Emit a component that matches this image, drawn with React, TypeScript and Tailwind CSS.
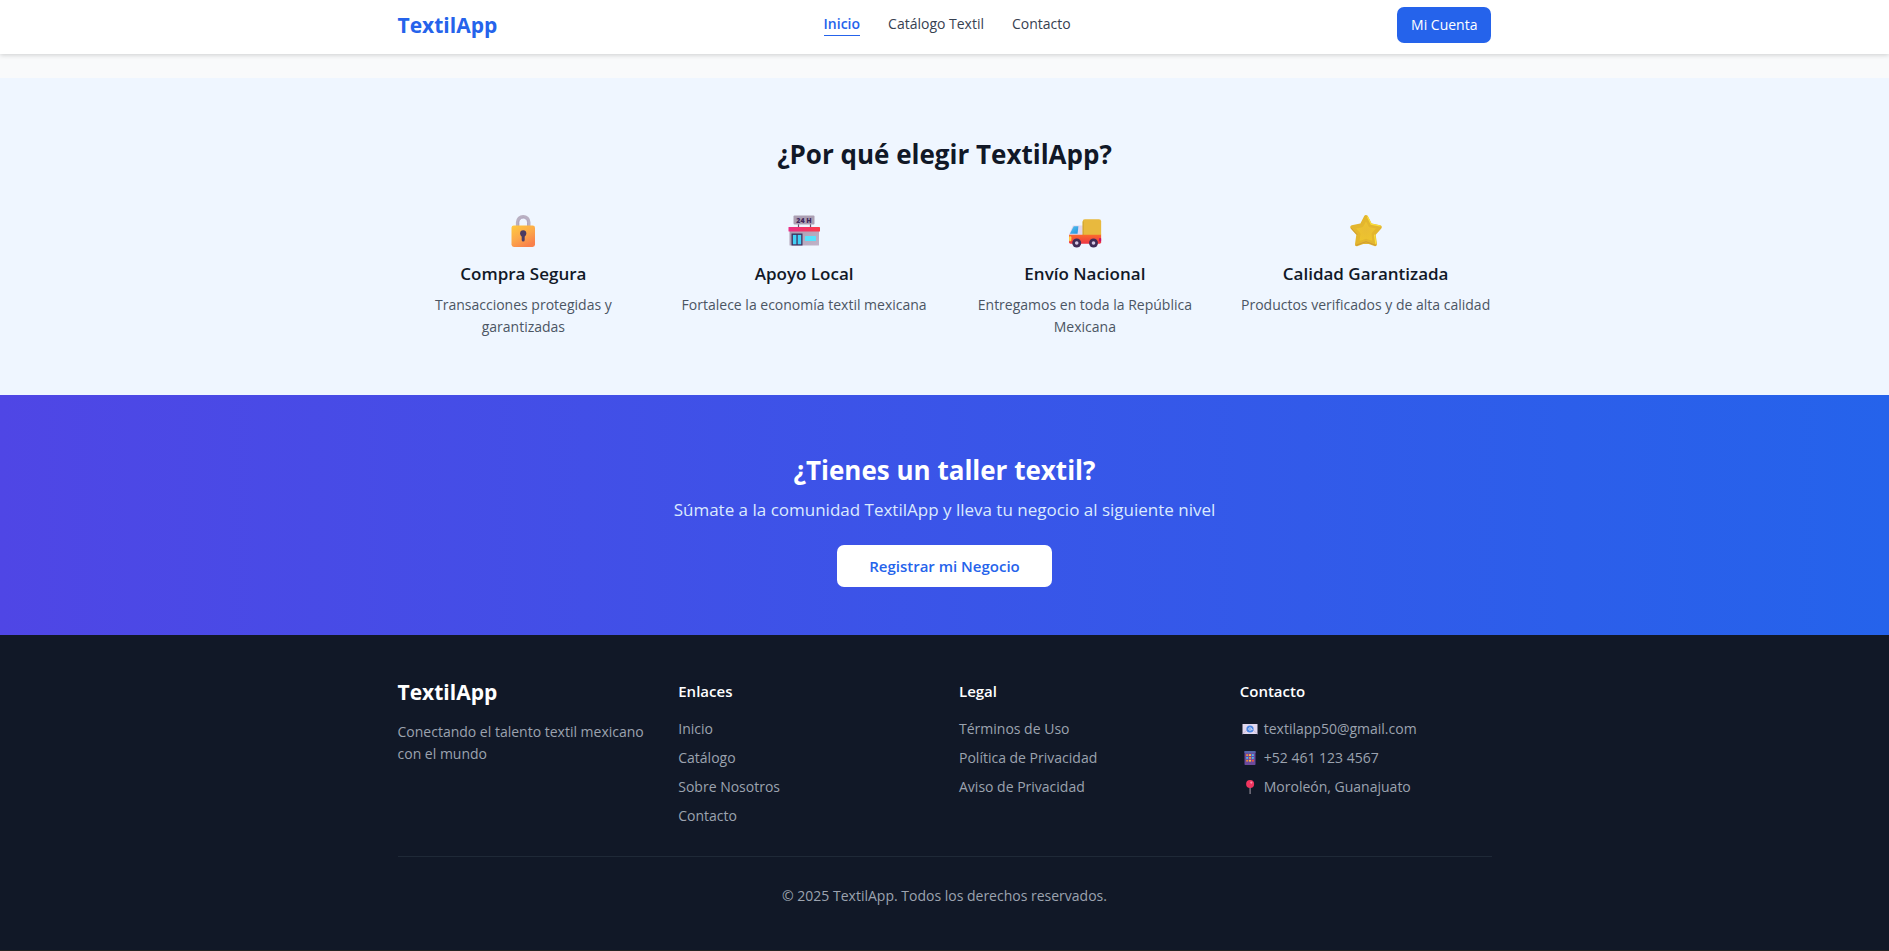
import type { ReactNode } from 'react';

function LockIcon() {
  return (
    <svg viewBox="0 0 34 34" className="size-[34px]" aria-hidden="true">
      <defs>
        <linearGradient id="lockBody" x1="0" y1="0" x2="0.6" y2="1">
          <stop offset="0" stopColor="#ffca3e" />
          <stop offset="0.55" stopColor="#fca94a" />
          <stop offset="1" stopColor="#f9814b" />
        </linearGradient>
      </defs>
      <path d="M11.4 13V8.2a5.8 5.8 0 0 1 11.600 0V13" fill="none" stroke="#b9b0c2" strokeWidth="3" />
      <path d="M12.900 13V8.400a4.300 4.300 0 0 1 8.600 0V13" fill="none" stroke="#a08fb0" strokeWidth="0.7" />
      <rect x="5.500" y="11.400" width="23.500" height="21.600" rx="2.400" fill="url(#lockBody)" />
      <circle cx="17.200" cy="19.400" r="3.100" fill="#4b3b62" />
      <rect x="15.700" y="19.500" width="3" height="8" rx="1.500" fill="#4b3b62" />
    </svg>
  );
}

function StoreIcon() {
  return (
    <svg viewBox="0 0 34 34" className="size-[34px]" aria-hidden="true">
      <defs>
        <linearGradient id="storeRoof">
          <stop offset="0" stopColor="#ea2f87" />
          <stop offset="1" stopColor="#fc3c48" />
        </linearGradient>
        <linearGradient id="storeWall" x1="0" y1="0" x2="1" y2="1">
          <stop offset="0" stopColor="#a79bad" />
          <stop offset="1" stopColor="#c1b3c9" />
        </linearGradient>
      </defs>
      <path d="M11.500 9v5M23.500 9v5" stroke="#635170" strokeWidth="1.200" />
      <rect x="6.500" y="1.500" width="21" height="9" rx="1" fill="#ab9fb3" />
      <text x="17" y="8.600" textAnchor="middle" fontSize="7" fontWeight="800" fill="#42285c" fontFamily="Open Sans, sans-serif">24 H</text>
      <rect x="2.500" y="14" width="29.500" height="17.500" rx="0.600" fill="url(#storeWall)" />
      <rect x="1.500" y="13" width="31.500" height="4.500" rx="0.600" fill="url(#storeRoof)" />
      <rect x="4.500" y="19.500" width="11" height="12" fill="#41305f" />
      <rect x="5.900" y="20.900" width="3.500" height="9.400" fill="#43d1f6" />
      <rect x="10.700" y="20.900" width="3.500" height="9.400" fill="#43d1f6" />
      <rect x="18" y="22" width="11" height="5" rx="0.500" fill="#56e2fc" />
    </svg>
  );
}

function TruckIcon() {
  return (
    <svg viewBox="0 0 32 32" className="size-[34px]" aria-hidden="true">
      <defs>
        <linearGradient id="truckBase" x1="0" y1="0" x2="0" y2="1">
          <stop offset="0" stopColor="#fb6a2c" />
          <stop offset="1" stopColor="#ee3745" />
        </linearGradient>
        <linearGradient id="truckGlass" x1="0" y1="0" x2="1" y2="1">
          <stop offset="0" stopColor="#58c3ef" />
          <stop offset="1" stopColor="#2293dd" />
        </linearGradient>
      </defs>
      <path d="M4.600 10.800H15v11H1v-2.400z" fill="#e2d6ec" />
      <path d="M5.400 11.600h4.400l-.8 7H1.800z" fill="url(#truckGlass)" />
      <rect x="13.800" y="5" width="17.400" height="16" rx="2" fill="#e8b93e" />
      <path d="M14.300 7v13" stroke="#cda431" strokeWidth="1" />
      <path d="M1 19.600h30.200v6.900a1.400 1.400 0 0 1-1.400 1.400H2.400A1.400 1.400 0 0 1 1 26.500z" fill="url(#truckBase)" />
      <rect x="1" y="21" width="2.200" height="4.600" rx="1" fill="#ffd545" />
      <rect x="29.200" y="22.500" width="2" height="3.500" rx="0.800" fill="#c90f65" />
      <circle cx="8.200" cy="27.300" r="4.200" fill="#402c56" />
      <circle cx="8.200" cy="27.300" r="1.700" fill="#d5c8e3" />
      <circle cx="24" cy="27.300" r="4.200" fill="#402c56" />
      <circle cx="24" cy="27.300" r="1.700" fill="#d5c8e3" />
    </svg>
  );
}

function StarIcon() {
  return (
    <svg viewBox="0 0 34 34" className="size-[34px]" aria-hidden="true">
      <defs>
        <radialGradient id="starFill" cx="0.5" cy="0.5" r="0.55">
          <stop offset="0" stopColor="#e9bd34" />
          <stop offset="0.7" stopColor="#edc42e" />
          <stop offset="1" stopColor="#dfb02f" />
        </radialGradient>
      </defs>
      <path
        d="M17 3L21.200 11.200L30.800 13.200L24.600 20.200L26 30.200L17 26.800L8 30.200L9.400 20.200L3.200 13.200L12.800 11.200Z"
        fill="url(#starFill)"
        stroke="#e3b62e"
        strokeWidth="4"
        strokeLinejoin="round"
      />
      <path d="M18.600 3l3.600 7.200 9 1.800M26.800 29.500L25.600 21" fill="none" stroke="#fbe03a" strokeWidth="1.200" strokeLinecap="round" />
      <path d="M2.400 14.500l5.600 6M7 31.300l10-3.600 9.500 3.600" fill="none" stroke="#cf9a35" strokeWidth="1" strokeLinecap="round" />
    </svg>
  );
}

function MailIcon() {
  return (
    <svg viewBox="0 0 16 16" className="size-4 shrink-0" aria-hidden="true">
      <rect x="0.500" y="3" width="15" height="10" fill="#e2d8ee" />
      <path d="M.5 13l5-4.500M15.500 13l-5-4.500" stroke="#c5b3d8" strokeWidth="0.800" />
      <circle cx="8" cy="8" r="3.600" fill="#4a84e0" />
      <circle cx="8" cy="8" r="1.300" fill="none" stroke="#dce7fb" strokeWidth="0.800" />
      <path d="M9.300 6.800v1.600c0 1 1.300.8 1.300-.4" fill="none" stroke="#dce7fb" strokeWidth="0.600" />
    </svg>
  );
}

function PhoneIcon() {
  const keys = [4.2, 7, 9.8];
  return (
    <svg viewBox="0 0 16 16" className="size-4 shrink-0" aria-hidden="true">
      <rect x="2.500" y="1" width="11" height="14" rx="0.800" fill="#6b4a9c" />
      <rect x="2.500" y="1" width="11" height="2" rx="0.600" fill="#5565a8" />
      {keys.map((y, row) => (
        <g key={y}>
          <rect x="4.200" y={y} width="2" height="1.800" fill={row === 1 ? '#4fb8f0' : '#f58a3c'} />
          <rect x="7" y={y} width="2" height="1.800" fill={row === 1 ? '#f58a3c' : '#f7c04a'} />
          <rect x="9.800" y={y} width="2" height="1.800" fill={row === 2 ? '#f5573c' : '#4fb8f0'} />
        </g>
      ))}
    </svg>
  );
}

function PinIcon() {
  return (
    <svg viewBox="0 0 16 16" className="size-4 shrink-0" aria-hidden="true">
      <rect x="7.500" y="7" width="1.200" height="8" fill="#8c8794" />
      <circle cx="8.100" cy="5" r="4" fill="#f0355f" />
      <circle cx="9.300" cy="3.600" r="1.100" fill="#ff8fa8" />
    </svg>
  );
}

const features: { icon: ReactNode; title: string; text: string }[] = [
  { icon: <LockIcon />, title: 'Compra Segura', text: 'Transacciones protegidas y garantizadas' },
  { icon: <StoreIcon />, title: 'Apoyo Local', text: 'Fortalece la economía textil mexicana' },
  { icon: <TruckIcon />, title: 'Envío Nacional', text: 'Entregamos en toda la República Mexicana' },
  { icon: <StarIcon />, title: 'Calidad Garantizada', text: 'Productos verificados y de alta calidad' },
];

const linkGroups = [
  { title: 'Enlaces', links: ['Inicio', 'Catálogo', 'Sobre Nosotros', 'Contacto'] },
  { title: 'Legal', links: ['Términos de Uso', 'Política de Privacidad', 'Aviso de Privacidad'] },
];

const contacts: { icon: ReactNode; text: string }[] = [
  { icon: <MailIcon />, text: 'textilapp50@gmail.com' },
  { icon: <PhoneIcon />, text: '+52 461 123 4567' },
  { icon: <PinIcon />, text: 'Moroleón, Guanajuato' },
];

export default function App() {
  return (
    <div className="flex min-h-screen flex-col bg-[#222222] font-['Segoe_UI','Open_Sans','Noto_Sans',sans-serif] text-[14px] leading-[22px]">
      <header className="relative z-10 bg-white shadow-[0_1px_5px_rgba(0,0,0,0.18)]">
        <div className="mx-auto flex h-[54px] max-w-[1152px] items-start justify-between px-[29px] pt-[7px]">
          <a href="#inicio" className="text-[21px] leading-9 font-bold text-[#2563eb]">TextilApp</a>
          <nav className="flex gap-7 pt-[6px] text-[#374151]">
            <a href="#inicio" className="border-b border-[#2563eb] font-semibold text-[#2563eb]">Inicio</a>
            <a href="#catalogo">Catálogo Textil</a>
            <a href="#contacto">Contacto</a>
          </nav>
          <button type="button" className="h-9 rounded-[7px] bg-[#2563eb] px-[14px] font-medium text-white">Mi Cuenta</button>
        </div>
      </header>

      <main>
        <section className="border-t-[24px] border-[#f9fafb] bg-[#eff6ff] pt-[58px] pb-[57px]">
          <div className="mx-auto max-w-[1152px] px-[29px]">
            <h2 className="text-center text-[26px] leading-9 font-bold text-[#111827]">¿Por qué elegir TextilApp?</h2>
            <div className="mt-[42px] grid grid-cols-4 gap-[29px]">
              {features.map((f) => (
                <div key={f.title} className="flex flex-col items-center text-center">
                  {f.icon}
                  <h3 className="mt-[14px] text-[17px] leading-6 font-semibold text-[#111827]">{f.title}</h3>
                  <p className="mt-2 text-[#4b5563]">{f.text}</p>
                </div>
              ))}
            </div>
          </div>
        </section>

        <section className="flex flex-col items-center bg-[linear-gradient(to_right,#4f46e5,#2563eb)] pt-[57px] pb-[48px] text-center text-white">
          <h2 className="text-[26px] leading-9 font-bold">¿Tienes un taller textil?</h2>
          <p className="mt-2 text-[17px] leading-7 text-[#dbeafe]">Súmate a la comunidad TextilApp y lleva tu negocio al siguiente nivel</p>
          <button type="button" className="mt-[21px] h-[42px] rounded-[7px] bg-white px-8 text-[15px] font-semibold text-[#2563eb]">Registrar mi Negocio</button>
        </section>
      </main>

      <footer className="bg-[#111827] pt-[42px] pb-[43px] text-[#9ca3af]">
        <div className="mx-auto max-w-[1152px] px-[29px]">
          <div className="grid grid-cols-4 gap-[29px]">
            <div>
              <p className="text-[21px] leading-[30px] font-bold text-white">TextilApp</p>
              <p className="mt-[14px]">Conectando el talento textil mexicano con el mundo</p>
            </div>
            {linkGroups.map((g) => (
              <nav key={g.title} aria-label={g.title}>
                <h3 className="text-[15px] leading-7 font-semibold text-white">{g.title}</h3>
                <ul className="mt-[13px] flex flex-col gap-[7px]">
                  {g.links.map((l) => (
                    <li key={l}><a href="#">{l}</a></li>
                  ))}
                </ul>
              </nav>
            ))}
            <div>
              <h3 className="text-[15px] leading-7 font-semibold text-white">Contacto</h3>
              <ul className="mt-[13px] flex flex-col gap-[7px]">
                {contacts.map((c) => (
                  <li key={c.text} className="flex items-center gap-[6px] pl-[2px]">{c.icon}<span>{c.text}</span></li>
                ))}
              </ul>
            </div>
          </div>
          <p className="mt-[29px] border-t border-[#1f2937] pt-7 text-center">© 2025 TextilApp. Todos los derechos reservados.</p>
        </div>
      </footer>
    </div>
  );
}
